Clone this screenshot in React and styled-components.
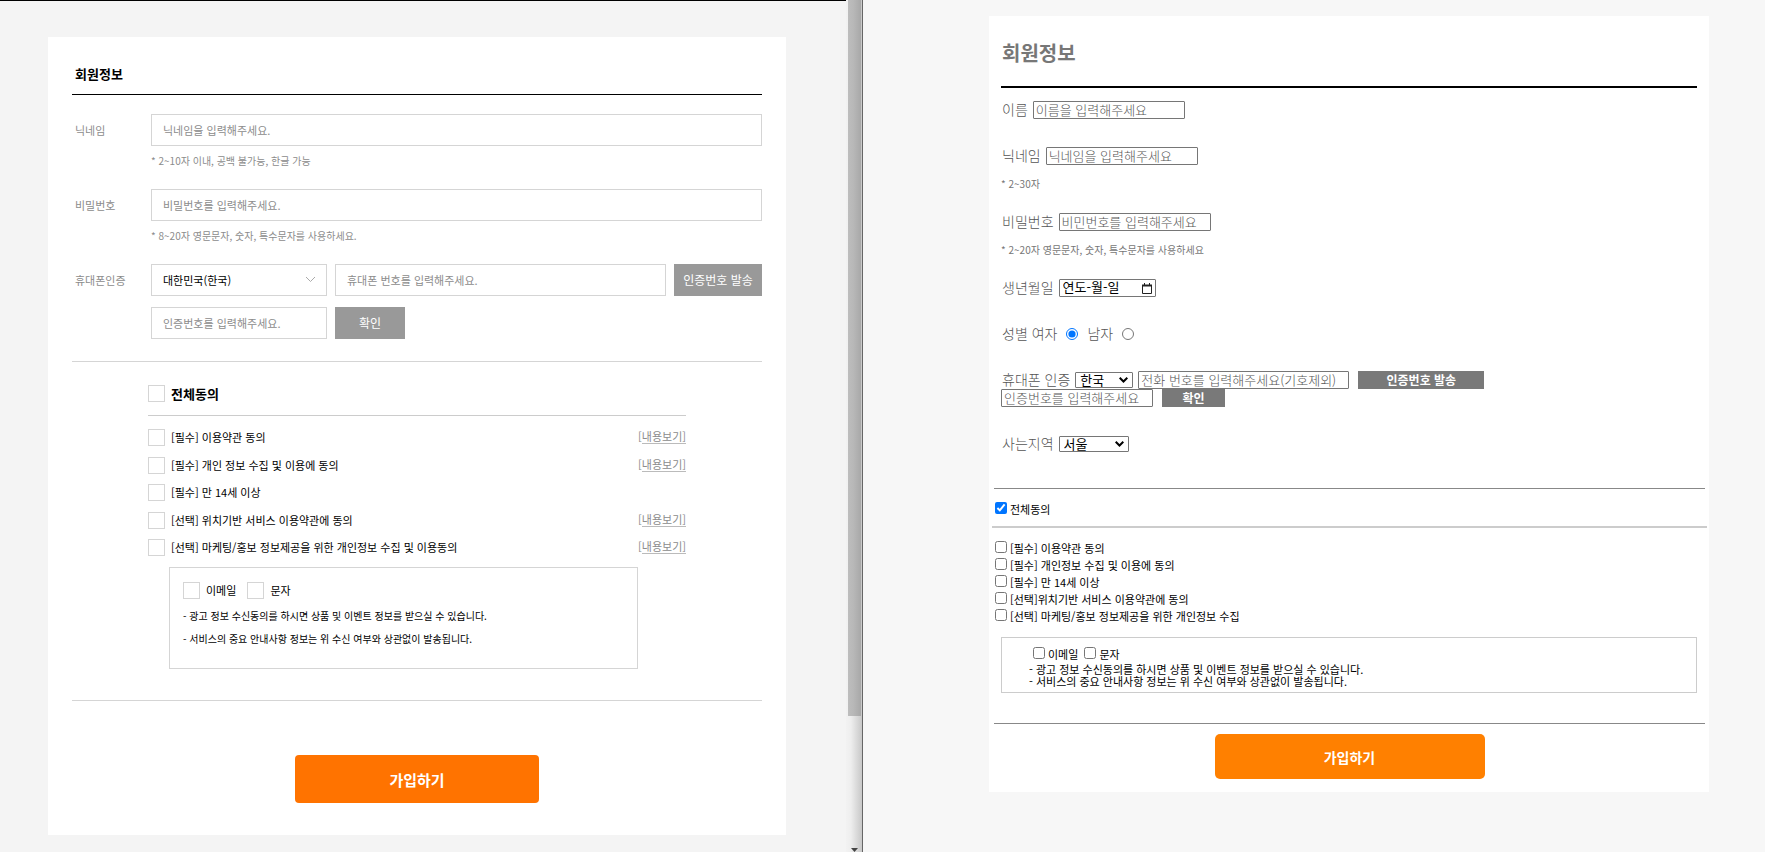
import React from "react";
import styled, { createGlobalStyle, css } from "styled-components";

const GlobalStyle = createGlobalStyle`
  *, *::before, *::after { box-sizing: border-box; }
  body { margin: 0; }
  body, input, select, button {
    font-family: "Noto Sans CJK KR", "Noto Sans", sans-serif;
  }
  h2, p, ul, fieldset { margin: 0; padding: 0; border: 0; }
  ul { list-style: none; }
`;

const Screen = styled.div`
  display: grid;
  grid-template-columns: minmax(0, 846fr) 17px minmax(0, 902fr);
  min-height: 100vh;
`;

const SelectWrap = styled.div`
  display: grid;
  flex: 0 0 ${(p) => p.$width};
  align-items: center;
  & > * { grid-area: 1 / 1; }
  svg {
    justify-self: end;
    margin-right: ${(p) => p.$inset};
    pointer-events: none;
  }
`;

/* ---------- original design (left) ---------- */

const DesignPane = styled.section`
  padding: 36px 60px 0 48px;
  border-top: 1px solid #000;
  background: #f4f4f4;
`;

const DesignCard = styled.form`
  padding: 27px 24px 32px;
  background: #fff;
`;

const DesignTitle = styled.h2`
  padding: 0 3px 10px;
  border-bottom: 1px solid #000;
  color: #000;
  font-size: 13px;
  line-height: 20px;
  font-weight: 700;
`;

const DesignFields = styled.div`
  display: flex;
  flex-direction: column;
  gap: 21px;
  padding: 19px 0 22px;
  border-bottom: 1px solid #d5d5d5;
`;

const DesignField = styled.div`
  display: grid;
  grid-template-columns: 79px minmax(0, 1fr);
`;

const DesignLabel = styled.label`
  padding-left: 3px;
  color: #8c8c8c;
  font-size: 11px;
  line-height: 32px;
`;

const DesignInputRow = styled.div`
  display: flex;
  gap: 8px;
  & + & { margin-top: 11px; }
`;

const boxed = css`
  height: 32px;
  padding: 0 11px;
  border: 1px solid #d5d5d5;
  border-radius: 0;
  background: #fff;
  font-size: 11px;
  color: #000;
`;

const DesignInput = styled.input`
  ${boxed}
  flex: ${(p) => (p.$narrow ? "0 0 176px" : "1 1 0")};
  min-width: 0;
  width: 100%;
  &::placeholder { color: #8c8c8c; opacity: 1; }
`;

const DesignSelect = styled.select`
  ${boxed}
  width: 100%;
  appearance: none;
`;

const DesignButton = styled.button`
  flex: 0 0 ${(p) => (p.$small ? "70px" : "88px")};
  height: 32px;
  padding: 0 0 2px;
  border: 0;
  background: #999;
  color: #fff;
  font-size: 12px;
`;

const DesignHint = styled.p`
  margin-top: 7px;
  color: #8c8c8c;
  font-size: 10px;
  line-height: 15px;
`;

const DesignTerms = styled.div`
  padding: 23px 76px 31px;
  border-bottom: 1px solid #d5d5d5;
`;

const DesignAll = styled.div`
  padding-bottom: 13px;
  border-bottom: 1px solid #ccc;
`;

const DesignList = styled.ul`
  display: flex;
  flex-direction: column;
  justify-content: space-between;
  height: 127px;
  margin: 13px 0 11px;
`;

const DesignItem = styled.li`
  display: flex;
  justify-content: space-between;
`;

const DesignCheckLabel = styled.label`
  display: flex;
  align-items: center;
  gap: 6px;
  color: #000;
  font-size: ${(p) => (p.$bold ? "13px" : "11px")};
  font-weight: ${(p) => (p.$bold ? 700 : 400)};
  line-height: 17px;
`;

const SquareCheck = styled.input`
  appearance: none;
  width: 17px;
  height: 17px;
  margin: 0;
  border: 1px solid #d5d5d5;
  background: #fff;
  &:checked { background: #ff7300; }
`;

const ViewLink = styled.a`
  color: #8c8c8c;
  font-size: 11px;
  line-height: 14px;
  text-decoration: none;
  span {
    display: inline-block;
    border-bottom: 1px solid #bbb;
  }
`;

const DesignChannels = styled.div`
  margin: 0 48px 0 21px;
  padding: 14px 13px 18px;
  border: 1px solid #d5d5d5;
`;

const DesignChannelRow = styled.div`
  display: flex;
  gap: 11px;
  margin-bottom: 5px;
`;

const DesignNote = styled.p`
  color: #000;
  font-size: 10px;
  line-height: 23px;
`;

const DesignSubmit = styled.button`
  display: block;
  width: 244px;
  height: 48px;
  margin: 54px auto 0;
  padding: 0;
  border: 0;
  border-radius: 4px;
  background: #ff7300;
  color: #fff;
  font-size: 15px;
  font-weight: 700;
`;

/* ---------- divider with scrollbar ---------- */

const ScrollTrack = styled.div`
  display: flex;
  flex-direction: column;
  justify-content: space-between;
  align-items: center;
  padding-left: 1px;
  border-right: 1px solid #666;
  background: linear-gradient(90deg, #f2f2f2, #eee 30%, #c8c8c8);
`;

const ScrollThumb = styled.div`
  width: 13px;
  height: 84%;
  background: linear-gradient(90deg, #bdbdbd, #b8b8b8 40%, #a8a8a8);
`;

/* ---------- implemented page (right) ---------- */

const BuildPane = styled.section`
  padding: 16px 56px 0 126px;
  background: #f7f7f7;
`;

const BuildCard = styled.form`
  padding: 25px 0 13px;
  background: #fff;
`;

const BuildTitle = styled.h2`
  margin: 0 12px;
  padding: 0 1px 21px;
  border-bottom: 2px solid #000;
  color: #777;
  font-size: 20px;
  line-height: 24px;
  font-weight: 700;
`;

const BuildFields = styled.div`
  padding: 13px 12px 35px;
`;

const BuildField = styled.div`
  margin-bottom: ${(p) => (p.$hinted ? "22px" : "28px")};
  &:last-child { margin-bottom: 0; }
`;

const BuildRow = styled.div`
  display: flex;
  align-items: center;
  gap: ${(p) => (p.$wide ? "9px" : "5px")};
  height: 18px;
  color: #555;
  font-size: 14px;
  font-weight: 300;
  line-height: 18px;
  white-space: nowrap;
  label { padding-bottom: 2px; }
`;

const BuildLabel = styled.label`
  padding-left: 1px;
`;

const GenderLabel = styled.span`
  padding: 0 0 2px 1px;
`;

const Group = styled.div`
  display: flex;
  align-items: center;
  gap: ${(p) => (p.$wide ? "9px" : "5px")};
`;

const BuildInput = styled.input`
  width: ${(p) => (p.$wide ? "211px" : "152px")};
  height: 18px;
  padding: 0 2px 2px;
  border: 1px solid #767676;
  border-radius: 1px;
  font-size: 13px;
  font-weight: 300;
  line-height: 16px;
  &::placeholder { color: #555; opacity: 1; }
`;

const DateBox = styled.div`
  display: flex;
  align-items: center;
  width: 97px;
  height: 18px;
  padding: 0 3px;
  border: 1px solid #767676;
  border-radius: 1px;
  input {
    flex: 1;
    min-width: 0;
    height: 16px;
    padding: 0 0 2px;
    border: 0;
    outline: 0;
    background: none;
    font-size: 13px;
    line-height: 16px;
    &::placeholder { color: #000; opacity: 1; }
  }
  button {
    display: flex;
    padding: 0;
    border: 0;
    background: none;
  }
`;

const BuildSelect = styled.select`
  width: 100%;
  height: 16px;
  padding: 0 4px;
  border: 1px solid #767676;
  border-radius: 1px;
  appearance: none;
  background: #fff;
  color: #000;
  font-size: 13px;
  line-height: 14px;
`;

const Radio = styled.input`
  width: 12px;
  height: 12px;
  margin: 0;
`;

const BuildButton = styled.button`
  width: ${(p) => (p.$small ? "63px" : "126px")};
  height: 18px;
  padding: 0;
  border: 0;
  background: #797979;
  color: #fff;
  font-size: 12px;
  line-height: 18px;
  font-weight: 700;
`;

const BuildHint = styled.p`
  margin-top: 12px;
  color: #777;
  font-size: 10px;
  line-height: 14px;
`;

const BuildAll = styled.div`
  margin: 0 4px 0 5px;
  padding: 12px 1px 8px;
  border-top: 1px solid #888;
`;

const BuildList = styled.ul`
  margin: 0 2px 0 3px;
  padding: 12px 3px;
  border-top: 2px solid #ccc;
`;

const BuildCheckLabel = styled.label`
  display: flex;
  align-items: center;
  gap: 3px;
  color: #000;
  font-size: 11px;
  line-height: 17px;
  input {
    width: 12px;
    height: 12px;
    margin: 0 0 3px;
  }
`;

const BuildChannels = styled.div`
  margin: 0 12px 30px;
  padding: 8px 27px 5px;
  border: 1px solid #ccc;
`;

const BuildChannelRow = styled.div`
  display: flex;
  gap: 6px;
  padding-left: 4px;
`;

const BuildNote = styled.p`
  color: #000;
  font-size: 11px;
  line-height: 12px;
`;

const BuildFooter = styled.div`
  margin: 0 4px 0 5px;
  padding-top: 10px;
  border-top: 1px solid #888;
`;

const BuildSubmit = styled.button`
  display: block;
  width: 270px;
  height: 45px;
  margin: 0 auto;
  padding: 0;
  border: 0;
  border-radius: 5px;
  background: #ff8000;
  color: #fff;
  font-size: 14px;
  font-weight: 700;
`;

const designTerms = [
  { text: "[필수] 이용약관 동의", view: true },
  { text: "[필수] 개인 정보 수집 및 이용에 동의", view: true },
  { text: "[필수] 만 14세 이상", view: false },
  { text: "[선택] 위치기반 서비스 이용약관에 동의", view: true },
  { text: "[선택] 마케팅/홍보 정보제공을 위한 개인정보 수집 및 이용동의", view: true },
];

const buildTerms = [
  "[필수] 이용약관 동의",
  "[필수] 개인정보 수집 및 이용에 동의",
  "[필수] 만 14세 이상",
  "[선택]위치기반 서비스 이용약관에 동의",
  "[선택] 마케팅/홍보 정보제공을 위한 개인정보 수집",
];

const notes = [
  "- 광고 정보 수신동의를 하시면 상품 및 이벤트 정보를 받으실 수 있습니다.",
  "- 서비스의 중요 안내사항 정보는 위 수신 여부와 상관없이 발송됩니다.",
];

function SquareOption({ text, bold }) {
  return (
    <DesignCheckLabel $bold={bold}>
      <SquareCheck type="checkbox" />
      {text}
    </DesignCheckLabel>
  );
}

function CheckOption({ text, checked }) {
  return (
    <BuildCheckLabel>
      <input type="checkbox" defaultChecked={checked} />
      {text}
    </BuildCheckLabel>
  );
}

function BuildDropdown({ width, children, ...rest }) {
  return (
    <SelectWrap $width={width} $inset="5px">
      <BuildSelect {...rest}>{children}</BuildSelect>
      <svg width="9" height="6" viewBox="0 0 9 6" fill="none" stroke="#000" strokeWidth="2">
        <path d="M.7 .8L4.500 4.500L8.300 .8" />
      </svg>
    </SelectWrap>
  );
}

function DesignForm() {
  return (
    <DesignCard>
      <DesignTitle>회원정보</DesignTitle>
      <DesignFields>
        <DesignField>
          <DesignLabel htmlFor="d-nick">닉네임</DesignLabel>
          <div>
            <DesignInputRow>
              <DesignInput id="d-nick" placeholder="닉네임을 입력해주세요." />
            </DesignInputRow>
            <DesignHint>* 2~10자 이내, 공백 불가능, 한글 가능</DesignHint>
          </div>
        </DesignField>
        <DesignField>
          <DesignLabel htmlFor="d-pw">비밀번호</DesignLabel>
          <div>
            <DesignInputRow>
              <DesignInput id="d-pw" type="password" placeholder="비밀번호를 입력해주세요." />
            </DesignInputRow>
            <DesignHint>* 8~20자 영문문자, 숫자, 특수문자를 사용하세요.</DesignHint>
          </div>
        </DesignField>
        <DesignField>
          <DesignLabel htmlFor="d-phone">휴대폰인증</DesignLabel>
          <div>
            <DesignInputRow>
              <SelectWrap $width="176px" $inset="11px">
                <DesignSelect aria-label="국가">
                  <option>대한민국(한국)</option>
                </DesignSelect>
                <svg width="11" height="8" viewBox="0 0 11 8" fill="none" stroke="#aaa">
                  <path d="M1 1l4.500 4.500L10 1" />
                </svg>
              </SelectWrap>
              <DesignInput id="d-phone" type="tel" placeholder="휴대폰 번호를 입력해주세요." />
              <DesignButton type="button">인증번호 발송</DesignButton>
            </DesignInputRow>
            <DesignInputRow>
              <DesignInput $narrow aria-label="인증번호" placeholder="인증번호를 입력해주세요." />
              <DesignButton $small type="button">확인</DesignButton>
            </DesignInputRow>
          </div>
        </DesignField>
      </DesignFields>
      <DesignTerms>
        <DesignAll>
          <SquareOption text="전체동의" bold />
        </DesignAll>
        <DesignList>
          {designTerms.map((t) => (
            <DesignItem key={t.text}>
              <SquareOption text={t.text} />
              {t.view && (
                <ViewLink href="#">
                  [<span>내용보기]</span>
                </ViewLink>
              )}
            </DesignItem>
          ))}
        </DesignList>
        <DesignChannels>
          <DesignChannelRow>
            <SquareOption text="이메일" />
            <SquareOption text="문자" />
          </DesignChannelRow>
          {notes.map((n) => (
            <DesignNote key={n}>{n}</DesignNote>
          ))}
        </DesignChannels>
      </DesignTerms>
      <DesignSubmit type="button">가입하기</DesignSubmit>
    </DesignCard>
  );
}

function BuildForm() {
  return (
    <BuildCard>
      <BuildTitle>회원정보</BuildTitle>
      <BuildFields>
        <BuildField>
          <BuildRow>
            <BuildLabel htmlFor="b-name">이름</BuildLabel>
            <BuildInput id="b-name" placeholder="이름을 입력해주세요" />
          </BuildRow>
        </BuildField>
        <BuildField $hinted>
          <BuildRow>
            <BuildLabel htmlFor="b-nick">닉네임</BuildLabel>
            <BuildInput id="b-nick" placeholder="닉네임을 입력해주세요" />
          </BuildRow>
          <BuildHint>* 2~30자</BuildHint>
        </BuildField>
        <BuildField $hinted>
          <BuildRow>
            <BuildLabel htmlFor="b-pw">비밀번호</BuildLabel>
            <BuildInput id="b-pw" type="password" placeholder="비민번호를 입력해주세요" />
          </BuildRow>
          <BuildHint>* 2~20자 영문문자, 숫자, 특수문자를 사용하세요</BuildHint>
        </BuildField>
        <BuildField>
          <BuildRow>
            <BuildLabel htmlFor="b-birth">생년월일</BuildLabel>
            <DateBox>
              <input id="b-birth" placeholder="연도-월-일" />
              <button type="button" aria-label="달력 열기">
                <svg width="10" height="11" viewBox="0 0 10 11" fill="none" stroke="#222">
                  <path d="M.5 2v8.500h9V2" />
                  <path d="M0 2.500h10" strokeWidth="2" />
                  <path d="M2.500 0v2M7.500 0v2" />
                </svg>
              </button>
            </DateBox>
          </BuildRow>
        </BuildField>
        <BuildField>
          <BuildRow $wide role="radiogroup" aria-label="성별">
            <GenderLabel>
              성별 <label htmlFor="b-female">여자</label>
            </GenderLabel>
            <Radio id="b-female" type="radio" name="gender" defaultChecked />
            <label htmlFor="b-male">남자</label>
            <Radio id="b-male" type="radio" name="gender" />
          </BuildRow>
        </BuildField>
        <BuildField>
          <BuildRow>
            <BuildLabel htmlFor="b-phone">휴대폰 인증</BuildLabel>
            <Group $wide>
              <Group>
                <BuildDropdown width="58px" aria-label="국가">
                  <option>한국</option>
                </BuildDropdown>
                <BuildInput $wide id="b-phone" type="tel" placeholder="전화 번호를 입력해주세요(기호제외)" />
              </Group>
              <BuildButton type="button">인증번호 발송</BuildButton>
            </Group>
          </BuildRow>
          <BuildRow $wide>
            <BuildInput aria-label="인증번호" placeholder="인증번호를 입력해주세요" />
            <BuildButton $small type="button">확인</BuildButton>
          </BuildRow>
        </BuildField>
        <BuildField>
          <BuildRow>
            <BuildLabel htmlFor="b-area">사는지역</BuildLabel>
            <BuildDropdown width="70px" id="b-area">
              <option>서울</option>
            </BuildDropdown>
          </BuildRow>
        </BuildField>
      </BuildFields>
      <BuildAll>
        <CheckOption text="전체동의" checked />
      </BuildAll>
      <BuildList>
        {buildTerms.map((t) => (
          <li key={t}>
            <CheckOption text={t} />
          </li>
        ))}
      </BuildList>
      <BuildChannels>
        <BuildChannelRow>
          <CheckOption text="이메일" />
          <CheckOption text="문자" />
        </BuildChannelRow>
        {notes.map((n) => (
          <BuildNote key={n}>{n}</BuildNote>
        ))}
      </BuildChannels>
      <BuildFooter>
        <BuildSubmit type="button">가입하기</BuildSubmit>
      </BuildFooter>
    </BuildCard>
  );
}

export default function App() {
  return (
    <Screen lang="ko">
      <GlobalStyle />
      <DesignPane>
        <DesignForm />
      </DesignPane>
      <ScrollTrack aria-hidden="true">
        <ScrollThumb />
        <svg width="7" height="4" viewBox="0 0 7 4" fill="#444">
          <path d="M0 0h7L3.500 4z" />
        </svg>
      </ScrollTrack>
      <BuildPane>
        <BuildForm />
      </BuildPane>
    </Screen>
  );
}
